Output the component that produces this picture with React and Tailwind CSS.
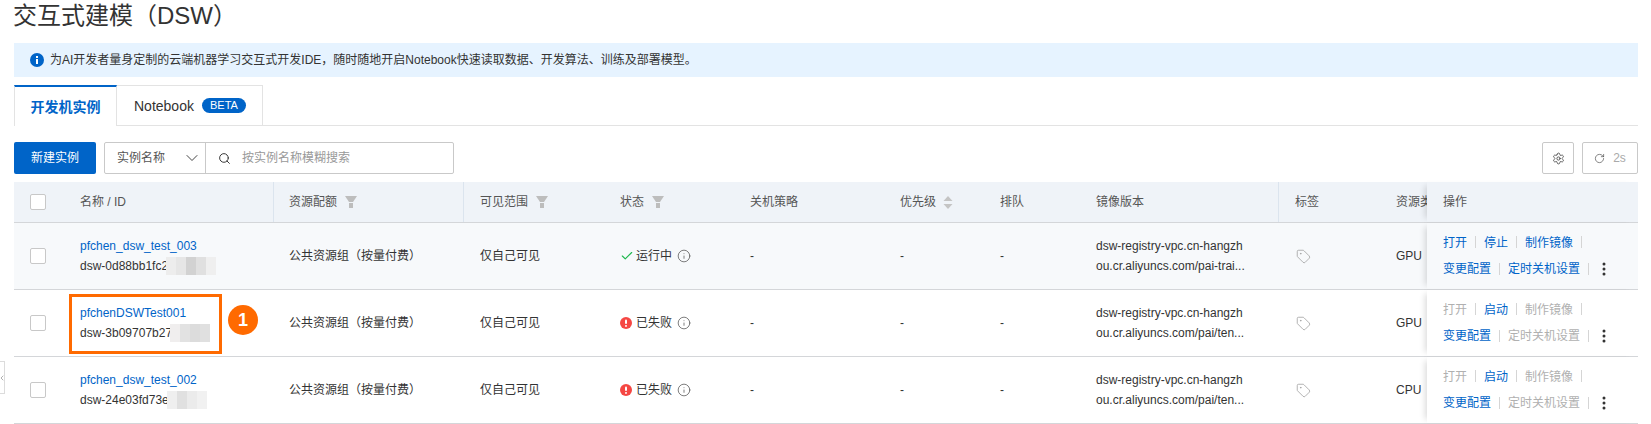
import { ChevronDown, Check, Info, RotateCw, Search, Settings, Tag, ChevronLeft } from 'lucide-react'

const cols = 'grid grid-cols-[260px_190px_140px_130px_150px_100px_96px_199px_101px_47px_211px]'

const rows = [
    {
        name: 'pfchen_dsw_test_003',
        id: 'dsw-0d88bb1fc2',
        status: 'running',
        image: 'ou.cr.aliyuncs.com/pai-trai...',
        type: 'GPU',
        bg: 'bg-[#f7f9fb]',
        blur: ['bg-[#ededed]', 'bg-[#e6e6e6]', 'bg-[#d2d2d2]', 'bg-[#e0e0e0]', 'bg-[#efefef]'],
    },
    {
        name: 'pfchenDSWTest001',
        id: 'dsw-3b09707b27',
        status: 'failed',
        image: 'ou.cr.aliyuncs.com/pai/ten...',
        type: 'GPU',
        bg: 'bg-white',
        blur: ['bg-[#f0eeee]', 'bg-[#e2e2e2]', 'bg-[#dcdcdc]', 'bg-[#e0e0e0]'],
    },
    {
        name: 'pfchen_dsw_test_002',
        id: 'dsw-24e03fd73e',
        status: 'failed',
        image: 'ou.cr.aliyuncs.com/pai/ten...',
        type: 'CPU',
        bg: 'bg-white',
        blur: ['bg-[#efefef]', 'bg-[#e0e0e0]', 'bg-[#ebebeb]', 'bg-[#f1f1f1]'],
    },
]

function Funnel() {
    return (
        <svg width="12" height="12" viewBox="0 0 12 12" className="ml-2 shrink-0">
            <path d="M0 0h12L8 6H4z" fill="#bdbdbd" />
            <rect x="4" y="7" width="4" height="5" fill="#bdbdbd" />
        </svg>
    )
}

function Sort() {
    return (
        <svg width="10" height="13" viewBox="0 0 10 13" className="ml-[7px] shrink-0">
            <path d="M5 0l4.5 5h-9z" fill="#c4c4c4" />
            <path d="M5 13L.5 8h9z" fill="#c4c4c4" />
        </svg>
    )
}

function HeadCell({ children, divider, tight }) {
    return (
        <div className={`flex items-center overflow-hidden whitespace-nowrap ${tight ? 'pl-[15px]' : 'pl-4'} ${divider ? 'border-r border-[#dbe4ee]' : ''}`}>
            {children}
        </div>
    )
}

function Checkbox() {
    return <span className="block w-4 h-4 bg-white border border-[#c8c8c8] rounded-[2px]"></span>
}

function Divider() {
    return <span className="inline-block w-px h-3 mx-2 bg-[#d5d5d5] align-[-1px]"></span>
}

function Action({ children, off }) {
    return <span className={off ? 'text-[#b0b0b0]' : 'text-[#0064c8]'}>{children}</span>
}

function Status({ status }) {
    if (status === 'running') {
        return (
            <span className="flex items-center">
                <Check size={14} strokeWidth={2} className="text-[#1fb84e] mr-[2px]" />
                运行中
                <Info size={14} strokeWidth={1.3} className="ml-[5px] text-[#555]" />
            </span>
        )
    }
    return (
        <span className="flex items-center">
            <svg width="12" height="12" viewBox="0 0 12 12" className="mr-1">
                <circle cx="6" cy="6" r="6" fill="#f54743" />
                <rect x="5" y="2.4" width="2" height="4.6" rx="1" fill="#fff" />
                <rect x="5" y="8" width="2" height="1.8" rx=".9" fill="#fff" />
            </svg>
            已失败
            <Info size={14} strokeWidth={1.3} className="ml-[5px] text-[#555]" />
        </span>
    )
}

function Row({ row }) {
    const off = row.status === 'failed'
    return (
        <div className={`${cols} h-[67px] border-b border-[#d4d6d9] text-[#333] ${row.bg}`}>
            <div className="flex items-center pl-4 relative">
                <Checkbox />
                <div className="ml-[34px] leading-[20px] whitespace-nowrap">
                    <div className="text-[#0064c8]">{row.name}</div>
                    <div className="flex items-center h-5">
                        {row.id}
                        <span className="flex h-[18px] -ml-[2px]">
                            {row.blur.map((c, i) => (
                                <span key={i} className={`block w-[10px] h-full ${c}`}></span>
                            ))}
                        </span>
                    </div>
                </div>
            </div>
            <div className="flex items-center pl-[15px]">公共资源组（按量付费）</div>
            <div className="flex items-center pl-4">仅自己可见</div>
            <div className="flex items-center pl-4"><Status status={row.status} /></div>
            <div className="flex items-center pl-4">-</div>
            <div className="flex items-center pl-4">-</div>
            <div className="flex items-center pl-4">-</div>
            <div className="flex items-center pl-4 leading-[20px] whitespace-nowrap">
                <div>
                    <div>dsw-registry-vpc.cn-hangzh</div>
                    <div>{row.image}</div>
                </div>
            </div>
            <div className="flex items-center pl-[17px]">
                <Tag size={15} strokeWidth={1.2} className="text-[#9a9a9a]" />
            </div>
            <div className="flex items-center pl-4 overflow-hidden">{row.type}</div>
            <div className={`flex flex-col justify-center pl-4 leading-[26px] whitespace-nowrap relative z-10 shadow-[-6px_0_6px_-4px_rgba(0,0,0,0.14)] ${row.bg}`}>
                <div>
                    <Action off={off}>打开</Action>
                    <Divider />
                    <Action>{off ? '启动' : '停止'}</Action>
                    <Divider />
                    <Action off={off}>制作镜像</Action>
                    <Divider />
                </div>
                <div className="flex items-center">
                    <Action>变更配置</Action>
                    <Divider />
                    <Action off={off}>定时关机设置</Action>
                    <Divider />
                    <svg width="4" height="14" viewBox="0 0 4 14" className="ml-[5px]">
                        <circle cx="2" cy="2" r="1.5" fill="#333" />
                        <circle cx="2" cy="7" r="1.5" fill="#333" />
                        <circle cx="2" cy="12" r="1.5" fill="#333" />
                    </svg>
                </div>
            </div>
        </div>
    )
}

export default function App() {
    return (
        <div className="relative h-[424px] w-[1651px] overflow-hidden bg-white px-[14px] text-xs text-[#333] font-['Liberation_Sans','Noto_Sans_CJK_SC',sans-serif]">
            <h1 className="h-[43px] pt-[2px] -ml-px text-2xl leading-[28px] font-normal text-[#333]">交互式建模（DSW）</h1>

            <div className="flex items-center h-[34px] pl-[16px] w-[1624px] bg-[#e6f3ff]">
                <svg width="14" height="14" viewBox="0 0 14 14" className="mr-[6px]">
                    <circle cx="7" cy="7" r="7" fill="#0064c8" />
                    <rect x="6" y="6" width="2" height="5" fill="#fff" />
                    <rect x="6" y="3" width="2" height="2" fill="#fff" />
                </svg>
                为AI开发者量身定制的云端机器学习交互式开发IDE，随时随地开启Notebook快速读取数据、开发算法、训练及部署模型。
            </div>

            <div className="flex h-[41px] mt-2 w-[1624px] border-b border-[#e3e3e3]">
                <div className="w-[103px] h-[41px] flex items-center justify-center bg-white border-t-2 border-t-[#0064c8] border-l border-r border-[#e3e3e3] text-[#0064c8] text-sm font-bold">
                    开发机实例
                </div>
                <div className="w-[146px] flex items-center pl-[17px] border-t border-r border-[#e3e3e3] text-sm text-[#333]">
                    Notebook
                    <span className="ml-2 w-[44px] h-[15px] flex items-center justify-center rounded-full bg-[#0064c8] text-white text-[11px]">BETA</span>
                </div>
            </div>

            <div className="flex items-center h-8 mt-4 w-[1624px]">
                <button className="w-[82px] h-8 bg-[#0064c8] text-white rounded-[2px]">新建实例</button>
                <div className="flex ml-2 w-[350px] h-8 border border-[#c9c9c9] rounded-[2px]">
                    <div className="flex items-center justify-between w-[101px] pl-3 pr-[3px] border-r border-[#c9c9c9] text-[#555]">
                        实例名称
                        <ChevronDown size={20} strokeWidth={1.1} className="text-[#333]" />
                    </div>
                    <div className="flex items-center pl-3 text-[#999]">
                        <Search size={13} strokeWidth={1.8} className="text-[#333] mr-[11px]" />
                        按实例名称模糊搜索
                    </div>
                </div>
                <button className="ml-auto w-8 h-8 flex items-center justify-center border border-[#c9c9c9] rounded-[2px] bg-white">
                    <Settings size={13} strokeWidth={1.4} className="text-[#333]" />
                </button>
                <button className="ml-2 w-[56px] h-8 flex items-center justify-center border border-[#c9c9c9] rounded-[2px] bg-white text-[#aaa]">
                    <RotateCw size={11} strokeWidth={1.4} className="text-[#444] mr-2" />
                    2s
                </button>
            </div>

            <div className="mt-2 w-[1624px]">
                <div className={`${cols} h-[41px] bg-[#eff3f8] border-b border-[#d4d6d9] text-[#555]`}>
                    <div className="flex items-center pl-4 border-r border-[#dbe4ee]">
                        <Checkbox />
                        <span className="ml-[34px]">名称 / ID</span>
                    </div>
                    <HeadCell divider tight>资源配额<Funnel /></HeadCell>
                    <HeadCell>可见范围<Funnel /></HeadCell>
                    <HeadCell>状态<Funnel /></HeadCell>
                    <HeadCell>关机策略</HeadCell>
                    <HeadCell>优先级<Sort /></HeadCell>
                    <HeadCell>排队</HeadCell>
                    <HeadCell divider>镜像版本</HeadCell>
                    <HeadCell>标签</HeadCell>
                    <HeadCell>资源类型</HeadCell>
                    <div className="flex items-center pl-4 relative z-10 bg-[#eff3f8] shadow-[-6px_0_6px_-4px_rgba(0,0,0,0.14)]">操作</div>
                </div>
                {rows.map((row) => (
                    <Row key={row.name} row={row} />
                ))}
            </div>

            <div className="absolute left-[69px] top-[294px] w-[153px] h-[60px] border-[3px] border-[#ff6a00]"></div>
            <div className="absolute left-[228px] top-[305px] w-[30px] h-[30px] rounded-full bg-[#ff6a00] text-white text-lg font-bold flex items-center justify-center">1</div>
            <div className="absolute -left-px top-[361px] w-[6px] h-[33px] flex items-center justify-center bg-white border border-[#dcdcdc] overflow-hidden">
                <ChevronLeft size={8} className="text-[#888] shrink-0" />
            </div>
        </div>
    )
}
